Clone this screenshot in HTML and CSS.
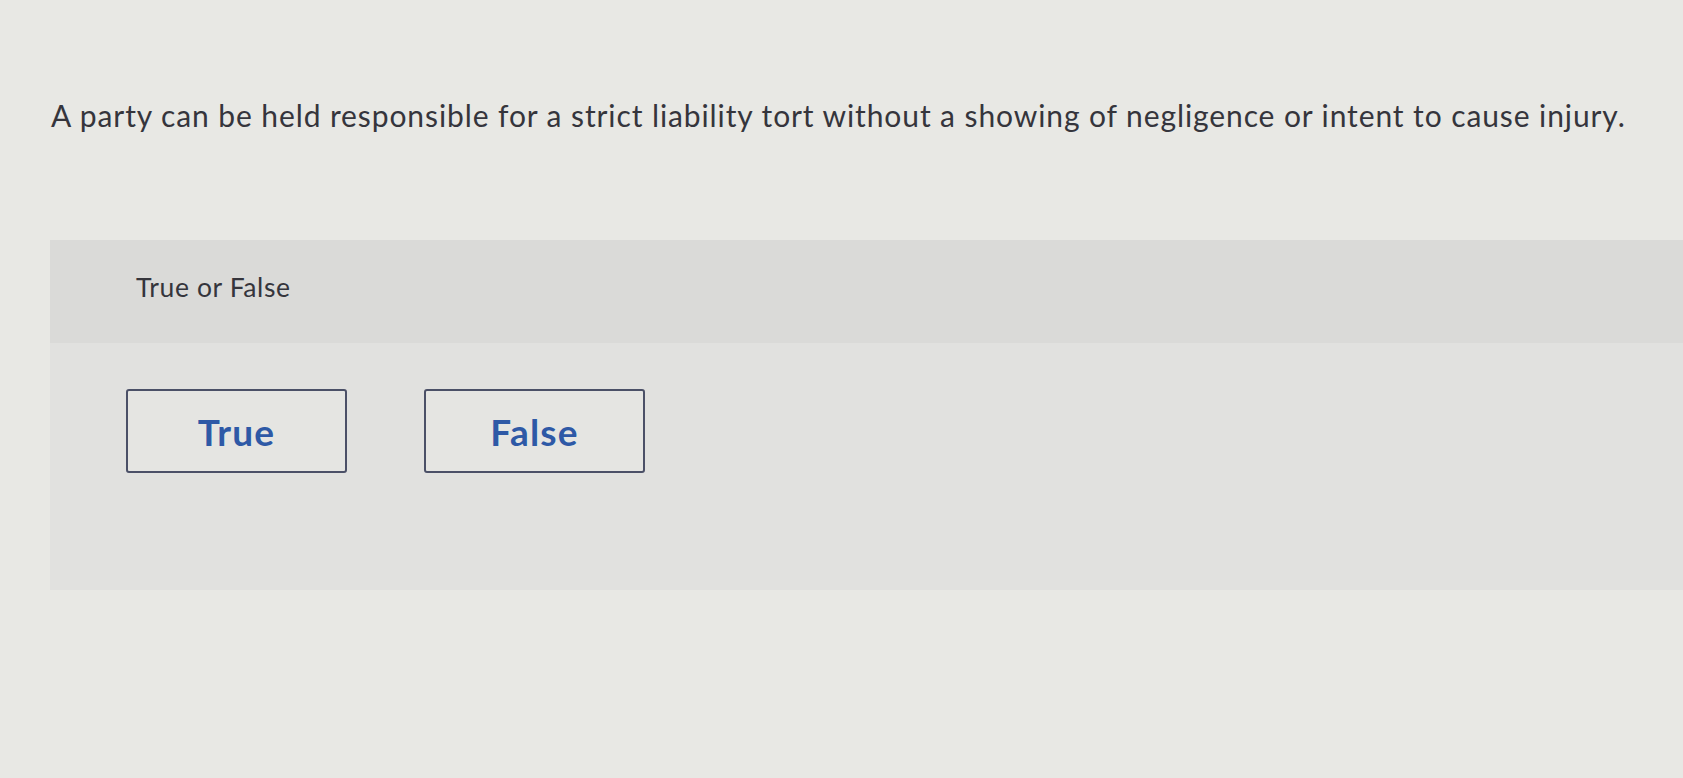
FILE: index.html
```html
<!DOCTYPE html>
<html lang="en">
<head>
    <meta charset="UTF-8">
    <title>True or False</title>
    <link rel="stylesheet" href="styles.css">
</head>
<body>

    <p class="prompt">A party can be held responsible for a strict liability tort without a showing of negligence or intent to cause injury.</p>

    <section class="answer">
        <div class="answer-head">True or False</div>
        <div class="answer-body">
            <button type="button" class="choice">True</button>
            <button type="button" class="choice">False</button>
        </div>
    </section>

</body>
</html>
```

FILE: styles.css
```css
body {
    margin: 0;
    font-family: Lato, "Open Sans", sans-serif;
    background-color: #e8e8e4;
    color: #35353c;
    overflow: hidden;
}
.prompt {
    margin: 0;
    padding: 97px 0 0 51px;
    font-size: 30px;
    line-height: 36px;
    letter-spacing: 0.9px;
    white-space: nowrap;
}
.answer {
    margin: 107px 0 0 50px;
    background-color: #e1e1df;
    height: 350px;
}
.answer-head {
    background-color: #dadad8;
    height: 103px;
    padding: 31px 0 0 86px;
    box-sizing: border-box;
    font-size: 26.5px;
    letter-spacing: 0.6px;
}
.answer-body {
    display: flex;
    gap: 77px;
    padding: 46px 0 0 76px;
}
.choice {
    width: 221px;
    height: 84px;
    background-color: #e5e5e2;
    border: 2px solid #4b5067;
    border-radius: 3px;
    font-family: Lato, sans-serif;
    font-weight: bold;
    font-size: 37px;
    letter-spacing: 1.2px;
    color: #2e59a6;
    cursor: pointer;
}
```
